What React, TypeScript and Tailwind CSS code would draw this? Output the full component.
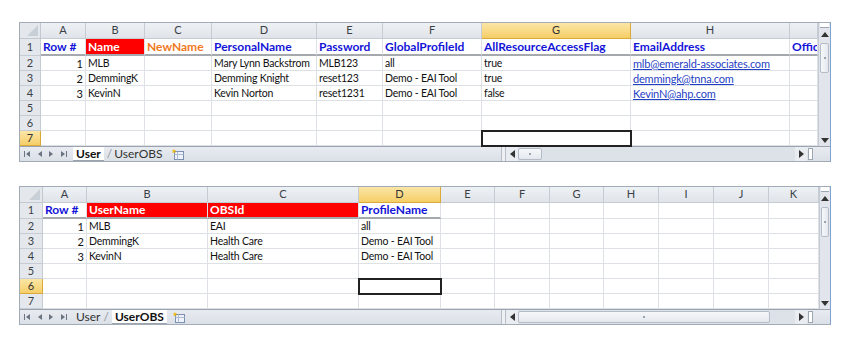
import React from 'react'

type Kind = 'num' | 'blue' | 'red' | 'orange' | 'link' | 'text'
type Cell = { t: string; k?: Kind } | null
type Col = { l: string; w: string }

const topCols: Col[] = [
  { l: 'A', w: 'w-[45px]' },
  { l: 'B', w: 'w-[59px]' },
  { l: 'C', w: 'w-[67px]' },
  { l: 'D', w: 'w-[105px]' },
  { l: 'E', w: 'w-[66px]' },
  { l: 'F', w: 'w-[99px]' },
  { l: 'G', w: 'w-[149px]' },
  { l: 'H', w: 'w-[159px]' },
  { l: '', w: 'w-[28px]' },
]

const botCols: Col[] = [
  { l: 'A', w: 'w-[44px]' },
  { l: 'B', w: 'w-[121px]' },
  { l: 'C', w: 'w-[151px]' },
  { l: 'D', w: 'w-[82px]' },
  { l: 'E', w: 'w-[54px]' },
  { l: 'F', w: 'w-[55px]' },
  { l: 'G', w: 'w-[54px]' },
  { l: 'H', w: 'w-[55px]' },
  { l: 'I', w: 'w-[55px]' },
  { l: 'J', w: 'w-[55px]' },
  { l: 'K', w: 'w-[50px]' },
]

const topRows: Cell[][] = [
  [
    { t: 'Row #', k: 'blue' },
    { t: 'Name', k: 'red' },
    { t: 'NewName', k: 'orange' },
    { t: 'PersonalName', k: 'blue' },
    { t: 'Password', k: 'blue' },
    { t: 'GlobalProfileId', k: 'blue' },
    { t: 'AllResourceAccessFlag', k: 'blue' },
    { t: 'EmailAddress', k: 'blue' },
    { t: 'Offic', k: 'blue' },
  ],
  [{ t: '1', k: 'num' }, { t: 'MLB' }, null, { t: 'Mary Lynn Backstrom' }, { t: 'MLB123' }, { t: 'all' }, { t: 'true' }, { t: 'mlb@emerald-associates.com', k: 'link' }, null],
  [{ t: '2', k: 'num' }, { t: 'DemmingK' }, null, { t: 'Demming Knight' }, { t: 'reset123' }, { t: 'Demo - EAI Tool' }, { t: 'true' }, { t: 'demmingk@tnna.com', k: 'link' }, null],
  [{ t: '3', k: 'num' }, { t: 'KevinN' }, null, { t: 'Kevin Norton' }, { t: 'reset1231' }, { t: 'Demo - EAI Tool' }, { t: 'false' }, { t: 'KevinN@ahp.com', k: 'link' }, null],
  [],
  [],
  [],
]

const botRows: Cell[][] = [
  [
    { t: 'Row #', k: 'blue' },
    { t: 'UserName', k: 'red' },
    { t: 'OBSId', k: 'red' },
    { t: 'ProfileName', k: 'blue' },
  ],
  [{ t: '1', k: 'num' }, { t: 'MLB' }, { t: 'EAI' }, { t: 'all' }],
  [{ t: '2', k: 'num' }, { t: 'DemmingK' }, { t: 'Health Care' }, { t: 'Demo - EAI Tool' }],
  [{ t: '3', k: 'num' }, { t: 'KevinN' }, { t: 'Health Care' }, { t: 'Demo - EAI Tool' }],
  [],
  [],
  [],
]

const font = "font-['Lato','Liberation_Sans',sans-serif]"

function kindClass(k?: Kind) {
  switch (k) {
    case 'num':
      return 'justify-end pr-[2px] text-[11px] text-[#111]'
    case 'blue':
      return 'font-bold text-[12px] text-[#1414d8]'
    case 'red':
      return 'font-bold text-[12px] text-white bg-[#ff0000]'
    case 'orange':
      return 'font-bold text-[12px] text-[#f27a1e]'
    case 'link':
      return 'text-[11px] tracking-[-0.2px] text-[#1f3fc4] underline'
    default:
      return 'text-[10.5px] tracking-[-0.2px] text-[#111]'
  }
}

function HScroll({ wide }: { wide: boolean }) {
  return (
    <div className="flex flex-1 h-full items-stretch">
      <div className="w-[5px] border-x border-[#b6bdc7] bg-[#eef0f3]" />
      <div className="w-[12px] flex items-center justify-center bg-[#e9ecf0]">
        <svg width="5" height="8" viewBox="0 0 5 8"><path d="M5 0 L0 4 L5 8 Z" fill="#333" /></svg>
      </div>
      <div className="flex-1 flex bg-[#dde2e9] py-[1px]">
        <div className={`${wide ? 'w-[252px]' : 'w-[24px]'} flex items-center justify-center rounded-[2px] border border-[#b4bcc7] bg-gradient-to-b from-[#f6f8fa] to-[#e4e8ee]`}>
          <div className="w-[2px] h-[2px] bg-[#9aa3ae]" />
        </div>
      </div>
      <div className="w-[12px] flex items-center justify-center bg-[#e9ecf0]">
        <svg width="5" height="8" viewBox="0 0 5 8"><path d="M0 0 L5 4 L0 8 Z" fill="#333" /></svg>
      </div>
      <div className="w-[5px] ml-[1px] mr-[3px] my-[1px] border border-[#9ea6b1] bg-white" />
    </div>
  )
}

function VScroll() {
  return (
    <div className="w-[14px] flex flex-col bg-[#e2e6ec] border-l border-[#c3cad3]">
      <div className="h-[5px] border-b border-[#9ea6b1] bg-white mx-[1px]" />
      <div className="h-[12px] flex items-center justify-center">
        <svg width="8" height="5" viewBox="0 0 8 5"><path d="M0 5 L4 0 L8 5 Z" fill="#333" /></svg>
      </div>
      <div className="flex-1 flex flex-col px-[1px]">
        <div className="h-[30px] mt-[3px] flex items-center justify-center rounded-[2px] border border-[#b4bcc7] bg-gradient-to-r from-[#f6f8fa] to-[#e4e8ee]">
          <div className="w-[2px] h-[2px] bg-[#9aa3ae]" />
        </div>
      </div>
      <div className="h-[12px] flex items-center justify-center">
        <svg width="8" height="5" viewBox="0 0 8 5"><path d="M0 0 L8 0 L4 5 Z" fill="#333" /></svg>
      </div>
    </div>
  )
}

function NavArrows() {
  return (
    <div className="flex items-center gap-[7px] pl-[4px] pr-[6px]">
      <svg width="6" height="6" viewBox="0 0 6 6"><path d="M0 0 H1 V6 H0 Z M6 0 L2 3 L6 6 Z" fill="#6b7480" /></svg>
      <svg width="5" height="6" viewBox="0 0 5 6"><path d="M5 0 L1 3 L5 6 Z" fill="#6b7480" /></svg>
      <svg width="5" height="6" viewBox="0 0 5 6"><path d="M0 0 L4 3 L0 6 Z" fill="#6b7480" /></svg>
      <svg width="6" height="6" viewBox="0 0 6 6"><path d="M0 0 L4 3 L0 6 Z M5 0 H6 V6 H5 Z" fill="#6b7480" /></svg>
    </div>
  )
}

function NewSheetIcon() {
  return (
    <svg width="13" height="11" viewBox="0 0 13 11" className="ml-[5px]">
      <rect x="3.5" y="2.5" width="9" height="8" fill="#eef3fa" stroke="#7c8fb0" />
      <path d="M3.5 5.5 H12.5 M6.5 2.5 V10.5" stroke="#aebbd0" />
      <path d="M3 0 L3.7 1.6 L5.4 1.6 L4 2.6 L4.6 4.2 L3 3.2 L1.4 4.2 L2 2.6 L0.6 1.6 L2.3 1.6 Z" fill="#f0b400" />
    </svg>
  )
}

function Tabs({ active }: { active: 0 | 1 }) {
  const names = ['User', 'UserOBS']
  return (
    <div className="w-[481px] flex items-stretch h-full">
      <NavArrows />
      <div className="flex items-stretch">
        {names.map((n, i) => (
          <div
            key={n}
            className={`flex items-center px-[3px] text-[12px] leading-none ${
              i === active ? 'bg-white font-bold text-[#111] border-b border-[#9aa3ae]' : 'text-[#333]'
            }`}
          >
            {i === 1 && active === 0 && <span className="mr-[2px] text-[#8a94a0] font-normal">/</span>}
            {n}
            {i === 0 && active === 1 && <span className="ml-[3px] text-[#8a94a0] font-normal">/</span>}
          </div>
        ))}
        <div className="flex items-center">
          <NewSheetIcon />
        </div>
      </div>
    </div>
  )
}

function Sheet({
  cols,
  rows,
  hdrW,
  row1H,
  thick,
  sel,
  active,
  wide,
}: {
  cols: Col[]
  rows: Cell[][]
  hdrW: string
  row1H: string
  thick: number
  sel: [number, number]
  active: 0 | 1
  wide: boolean
}) {
  return (
    <div className={`w-[812px] flex flex-col border border-[#a3abb6] border-r-[#7fa3cf] bg-white ${font}`}>
      <div className="flex">
        <div className="flex flex-col">
          {/* column headers */}
          <div className="flex h-[16px]">
            <div className={`${hdrW} relative bg-[#e4e8ed] border-r border-b border-[#c2c8d0]`}>
              <svg className="absolute right-[2px] bottom-[2px]" width="11" height="11" viewBox="0 0 11 11">
                <path d="M11 0 L11 11 L0 11 Z" fill="#c9cfd6" />
              </svg>
            </div>
            {cols.map((c, i) => (
              <div
                key={i}
                className={`${c.w} flex items-center justify-center text-[11px] border-r border-b ${
                  i === sel[0]
                    ? 'bg-gradient-to-b from-[#fbe6a6] to-[#f6ce66] text-[#333] border-[#d9a93c]'
                    : 'bg-gradient-to-b from-[#eef1f4] to-[#e0e4ea] text-[#3a3f46] border-[#c6ccd4]'
                }`}
              >
                {c.l}
              </div>
            ))}
          </div>
          {rows.map((r, ri) => (
            <div key={ri} className={`flex ${ri === 0 ? row1H : 'h-[15px]'}`}>
              <div
                className={`${hdrW} flex items-center justify-center text-[11px] border-r border-b ${
                  ri === sel[1]
                    ? 'bg-gradient-to-b from-[#fbe6a6] to-[#f6ce66] border-[#d9a93c] text-[#333]'
                    : 'bg-[#e4e8ed] border-[#c6ccd4] text-[#3a3f46]'
                }`}
              >
                {ri + 1}
              </div>
              {cols.map((c, ci) => {
                const cell = r[ci] ?? null
                const isSel = ci === sel[0] && ri === sel[1]
                const thickB = ri === 0 && ci < thick
                return (
                  <div
                    key={ci}
                    className={`${c.w} flex items-center overflow-hidden whitespace-nowrap pl-[2px] leading-none border-r border-[#dde0e4] ${
                      thickB ? 'border-b-2 border-b-[#a5a9ae]' : 'border-b border-b-[#dde0e4]'
                    } ${isSel ? 'relative z-10 outline-2 outline-[#222] -outline-offset-1' : ''} ${kindClass(cell?.k)}`}
                  >
                    {cell?.t}
                  </div>
                )
              })}
            </div>
          ))}
        </div>
        <VScroll />
      </div>
      <div className="flex h-[15px] border-t border-[#9aa3ae] bg-gradient-to-b from-[#e8ecf1] to-[#dbe0e7]">
        <Tabs active={active} />
        <HScroll wide={wide} />
        <div className="w-[14px]" />
      </div>
    </div>
  )
}

export default function App() {
  return (
    <div className="w-[850px] h-[340px] bg-white flex flex-col pl-[19px] pt-[22px] gap-[24px]">
      <Sheet cols={topCols} rows={topRows} hdrW="w-[21px]" row1H="h-[17px]" thick={9} sel={[6, 6]} active={0} wide={false} />
      <Sheet cols={botCols} rows={botRows} hdrW="w-[23px]" row1H="h-[16px]" thick={4} sel={[3, 5]} active={1} wide />
    </div>
  )
}
